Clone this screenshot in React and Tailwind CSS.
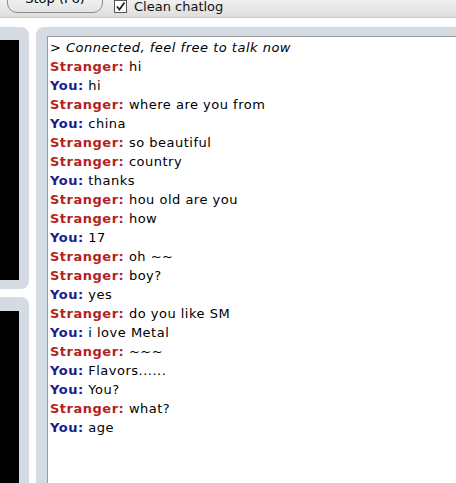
const lines = [
  ["S", "hi"],
  ["Y", "hi"],
  ["S", "where are you from"],
  ["Y", "china"],
  ["S", "so beautiful"],
  ["S", "country"],
  ["Y", "thanks"],
  ["S", "hou old are you"],
  ["S", "how"],
  ["Y", "17"],
  ["S", "oh ~~"],
  ["S", "boy?"],
  ["Y", "yes"],
  ["S", "do you like SM"],
  ["Y", "i love Metal"],
  ["S", "~~~"],
  ["Y", "Flavors......"],
  ["Y", "You?"],
  ["S", "what?"],
  ["Y", "age"],
];

export default function App() {
  return (
    <div className="h-screen w-full overflow-hidden bg-white flex flex-col font-['DejaVu_Sans',Verdana,sans-serif] text-[13px] text-black">
      {/* top bar */}
      <div className="h-[18px] shrink-0 overflow-hidden flex items-end gap-[11px] pl-[7px] bg-gradient-to-b from-[#f0f0f0] to-[#dedede] border-b border-[#c9c9c9]">
        <button className="w-[96px] h-[30px] mb-[4px] rounded-[10px] border border-[#8a8a8a] bg-gradient-to-b from-[#ffffff] to-[#e4e4e4] text-[13px] leading-[30px] text-black">
          Stop (F6)
        </button>
        <div className="flex items-center gap-[7px] mb-[4px]">
          <span className="w-[13px] h-[13px] border border-[#555] bg-white flex items-center justify-center">
            <svg width="11" height="11" viewBox="0 0 11 11">
              <path d="M2 5.5 L4.5 8.5 L9.5 1.5" fill="none" stroke="#222" strokeWidth="1.8" />
            </svg>
          </span>
          <span className="leading-[13px] text-[#111]">Clean chatlog</span>
        </div>
      </div>

      {/* body */}
      <div className="flex-1 min-h-0 flex gap-[7px] pt-[9px]">
        <div className="w-[29px] shrink-0 flex flex-col gap-[8px]">
          <div className="h-[262px] shrink-0 bg-[#d5dbe3] rounded-r-[8px] pt-[13px] pr-[10px] pb-[9px]">
            <div className="h-full bg-black" />
          </div>
          <div className="flex-1 bg-[#d5dbe3] rounded-tr-[8px] pt-[14px] pr-[10px]">
            <div className="h-full bg-black" />
          </div>
        </div>
        <div className="flex-1 min-w-0 bg-[#d5dbe3] rounded-tl-[8px] pt-[9px] pl-[11px] flex">
          <div className="flex-1 bg-white border-t border-l border-[#9c9c9c] pt-[1px] pl-[2px] leading-[19px] tracking-[0.5px]">
            <div className="italic">&gt; Connected, feel free to talk now</div>
            {lines.map(([who, text], i) => (
              <div key={i}>
                {who === "S" ? (
                  <span className="font-bold text-[#b51f1f]">Stranger:</span>
                ) : (
                  <span className="font-bold text-[#1b1b8e]">You:</span>
                )}{" "}
                {text}
              </div>
            ))}
          </div>
        </div>
      </div>
    </div>
  );
}
